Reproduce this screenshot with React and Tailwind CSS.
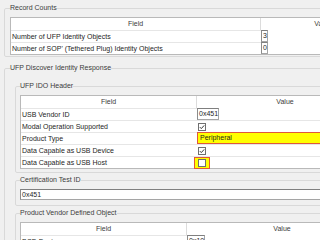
import React from 'react';

const Group = ({ title, className = '', children }) => (
  <fieldset className={`border border-[#d9d9d9] rounded-[2px] min-w-0 ${className}`}>
    <legend className="px-0 leading-[10px] text-[#3c3c3c]">{title}</legend>
    {children}
  </fieldset>
);

const CheckBox = ({ checked }) => (
  <svg width="8" height="8" viewBox="0 0 8 8" className="block">
    <rect x="0.5" y="0.5" width="7" height="7" fill="#ffffff" stroke="#6f6f6f" />
    {checked && <path d="M1.8 4.1 L3.3 5.6 L6.2 2.4" fill="none" stroke="#3a3a3a" strokeWidth="1" />}
  </svg>
);

const TextValue = ({ children }) => (
  <div className="h-full border border-[#a5a5a5] border-t-[#7f7f7f] border-l-[#8c8c8c] bg-white pl-[1px] flex items-center">
    {children}
  </div>
);

function Table({ fieldW, valueW, rows }) {
  return (
    <div className="border border-[#b9b9b9] bg-white" style={{ width: fieldW + valueW + 2 }}>
      <div className="flex h-[12px] text-[#3c3c3c]">
        <div className="flex items-center justify-center border-r border-[#dcdcdc]" style={{ width: fieldW }}>Field</div>
        <div className="flex-1 flex items-center justify-center">Value</div>
      </div>
      {rows.map((r, i) => (
        <div key={i} className="flex h-[12px]">
          <div className="flex items-center border-t border-[#e6e6e6] pl-[1px]" style={{ width: fieldW }}>{r.field}</div>
          <div className="flex-1 flex items-center">{r.value}</div>
        </div>
      ))}
    </div>
  );
}

const Check = ({ checked }) => (
  <div className="h-full w-full border-t border-[#e6e6e6] flex items-center pl-[1px]">
    <CheckBox checked={checked} />
  </div>
);

export default function App() {
  return (
    <div className="w-[320px] h-[240px] overflow-hidden bg-[#f0f0f0] font-['Liberation_Sans',Arial,sans-serif] text-[7px] leading-[10px] text-[#1e1e1e]">
      <div className="w-[420px] pl-[4px] pt-[3px]">
        <Group title="Record Counts" className="px-[5px] pt-[4px] pb-[1px]">
          <Table
            fieldW={250}
            valueW={124}
            rows={[
              { field: 'Number of UFP Identity Objects', value: <TextValue>3</TextValue> },
              { field: "Number of SOP' (Tethered Plug) Identity Objects", value: <TextValue>0</TextValue> },
            ]}
          />
        </Group>

        <Group title="UFP Discover Identity Response" className="mt-[6px] px-[5px] pb-[2px]">
          <Group title="UFP IDO Header" className="mt-[8px] ml-[5px] px-[4px] pt-[4px] pb-[3px]">
            <Table
              fieldW={176}
              valueW={176}
              rows={[
                { field: 'USB Vendor ID', value: <TextValue>0x451</TextValue> },
                { field: 'Modal Operation Supported', value: <Check checked /> },
                {
                  field: 'Product Type',
                  value: (
                    <div className="h-full w-full bg-[#ffff00] border border-[#e0583a] pl-[2px] flex items-center">Peripheral</div>
                  ),
                },
                { field: 'Data Capable as USB Device', value: <Check checked /> },
                {
                  field: 'Data Capable as USB Host',
                  value: (
                    <div className="h-full w-full border-t border-[#e6e6e6] flex items-center">
                      <div className="-ml-[3px] w-[16px] h-[12px] bg-[#ffff00] border border-[#e0583a] flex items-center justify-center">
                        <CheckBox />
                      </div>
                    </div>
                  ),
                },
              ]}
            />
          </Group>

          <Group title="Certification Test ID" className="mt-[2px] ml-[5px] px-[4px] pt-[4px] pb-[5px]">
            <div className="h-[11px] w-[360px]">
              <TextValue>0x451</TextValue>
            </div>
          </Group>

          <Group title="Product Vendor Defined Object" className="mt-[2px] ml-[5px] px-[4px] pt-[4px] pb-[3px]">
            <Table
              fieldW={166}
              valueW={190}
              rows={[
                { field: 'BCD Device', value: <TextValue>0x10</TextValue> },
                { field: 'Product ID', value: <TextValue>0x0</TextValue> },
              ]}
            />
          </Group>
        </Group>
      </div>
    </div>
  );
}
